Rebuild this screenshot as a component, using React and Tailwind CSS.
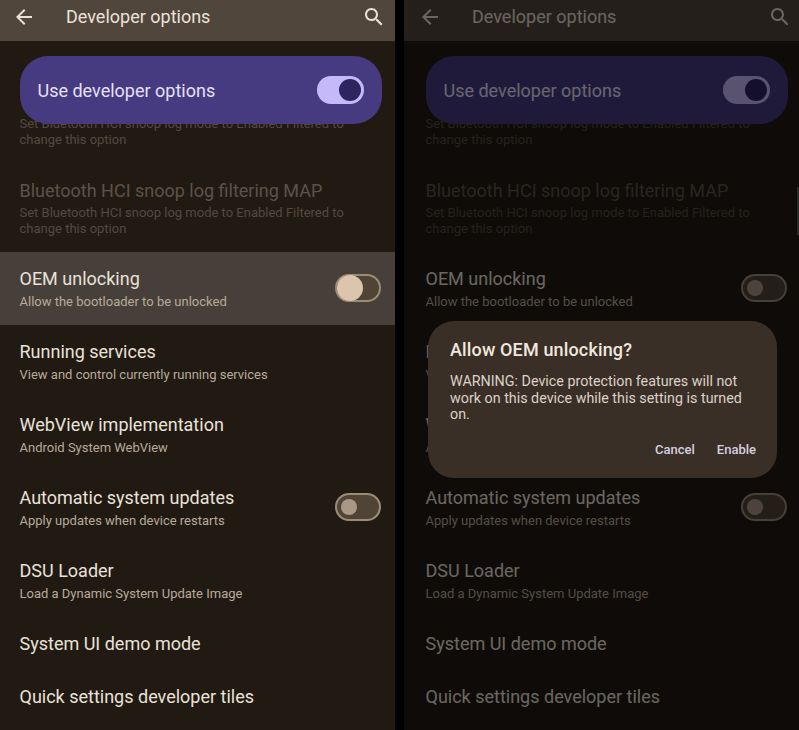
import React from 'react';

const Toggle = ({ pressed }) => (
  <div className="-mt-[1px] flex h-[28px] w-[46px] items-center rounded-full border-2 border-[#9c8c76] bg-[#4f4435] pl-[4px]">
    {pressed ? (
      <div className="-ml-[4px] h-[26px] w-[26px] shrink-0 rounded-full bg-[#dcc5ac]" />
    ) : (
      <div className="h-[16px] w-[16px] shrink-0 rounded-full bg-[#a99886]" />
    )}
  </div>
);

const Row = ({ title, sub, toggle, pressed, highlighted, className, shifted }) => (
  <div className={`flex items-center justify-between ${shifted ? 'pl-[21.5px] pr-[12px]' : 'pl-[19.5px] pr-[14px]'} ${highlighted ? 'bg-[#47403a]' : ''} ${className}`}>
    <div>
      <div className="h-[24px] text-[18px] leading-[24px] text-[#eae2d8]">{title}</div>
      {sub && <div className="mt-[3px] text-[13px] leading-[16px] text-[#b8ab99]">{sub}</div>}
    </div>
    {toggle && <Toggle pressed={pressed} />}
  </div>
);

// the right shot is cropped 2px further in, so its content sits 2px over
const Panel = ({ dimmed }) => (
  <div className="relative h-[730px] w-[395px] overflow-hidden bg-[#211a13] font-['Roboto',sans-serif]">
    {/* header, top is cropped off in the shot */}
    <div className={`flex h-[41px] items-center bg-[#50463b] pb-[7px] text-[#eae2d8] ${dimmed ? 'pl-[13.5px] pr-[7px]' : 'pl-[11.5px] pr-[9px]'}`}>
      <svg className="h-[24px] w-[24px]" viewBox="0 0 24 24" fill="currentColor">
        <path d="M20 11H7.83l5.59-5.59L12 4l-8 8 8 8 1.41-1.41L7.83 13H20v-2z" />
      </svg>
      <div className="ml-[30.5px] flex-1 text-[18px] leading-[24px]">Developer options</div>
      <svg className="h-[24px] w-[24px]" viewBox="0 0 24 24" fill="currentColor">
        <path d="M15.5 14h-.79l-.28-.27C15.41 12.59 16 11.11 16 9.5 16 5.91 13.09 3 9.5 3S3 5.91 3 9.5 5.91 16 9.5 16c1.61 0 3.09-.59 4.23-1.57l.27.28v.79l5 4.99L20.49 19l-4.99-5zm-6 0C7.01 14 5 11.99 5 9.5S7.01 5 9.5 5 14 7.01 14 9.5 11.99 14 9.5 14z" />
      </svg>
    </div>

    {/* main switch card, list scrolls under it */}
    <div className={`relative z-10 mt-[15px] flex h-[68px] w-[362px] items-center justify-between rounded-[28px] bg-[#463b80] pl-[18px] pr-[17.5px] ${dimmed ? 'ml-[21.5px]' : 'ml-[19.5px]'}`}>
      <span className="text-[18px] text-[#e6e0f8]">Use developer options</span>
      <div className="flex h-[28px] w-[47px] items-center justify-end rounded-full bg-[#c6b9f9] pr-[3px]">
        <div className="h-[22px] w-[22px] rounded-full bg-[#2e2560]" />
      </div>
    </div>

    <div className="-mt-[8px] flex flex-col">
      <div className={`h-[47px] text-[13px] leading-[16px] text-[#524a3f] ${dimmed ? 'pl-[21.5px]' : 'pl-[19.5px]'}`}>
        Set Bluetooth HCI snoop log mode to Enabled Filtered to
        <br />
        change this option
      </div>
      <div className={`h-[89px] pt-[15px] ${dimmed ? 'pl-[21.5px]' : 'pl-[19.5px]'}`}>
        <div className="mt-[1px] h-[24px] text-[18px] leading-[24px] text-[#5c5348]">Bluetooth HCI snoop log filtering MAP</div>
        <div className="mt-[2px] text-[13px] leading-[16px] text-[#524a3f]">
          Set Bluetooth HCI snoop log mode to Enabled Filtered to
          <br />
          change this option
        </div>
      </div>
      <Row shifted={dimmed} className="h-[73px]" title="OEM unlocking" sub="Allow the bootloader to be unlocked" toggle pressed={!dimmed} highlighted={!dimmed} />
      <Row shifted={dimmed} className="h-[73px]" title="Running services" sub="View and control currently running services" />
      <Row shifted={dimmed} className="h-[73px]" title="WebView implementation" sub="Android System WebView" />
      <Row shifted={dimmed} className="h-[73px]" title="Automatic system updates" sub="Apply updates when device restarts" toggle />
      <Row shifted={dimmed} className="h-[73px]" title="DSU Loader" sub="Load a Dynamic System Update Image" />
      <Row shifted={dimmed} className="h-[53px]" title="System UI demo mode" />
      <Row shifted={dimmed} className="h-[54px]" title="Quick settings developer tiles" />
    </div>

    {dimmed && (
      <>
        <div className="absolute inset-0 z-20 bg-black/55" />
        {/* scroll indicator */}
        <div className="absolute right-0 top-[187px] z-20 h-[48px] w-[2px] bg-[#2a2a28]" />
        <div className="absolute left-[24px] top-[321px] z-30 h-[157px] w-[349px] rounded-[26px] bg-[#3a2f26] pl-[22px] pr-[21px] pt-[17px]">
          <div className="text-[18px] font-medium leading-[24px] tracking-[0.15px] text-[#f0e8de]">Allow OEM unlocking?</div>
          <div className="mt-[11px] text-[14.3px] leading-[16.7px] text-[#dcd2c6]">
            WARNING: Device protection features will not work on this device while this setting is turned on.
          </div>
          <div className="mt-[19px] flex justify-end gap-[22px] text-[13px] font-medium leading-[16px] text-[#d6cfe0]">
            <span>Cancel</span>
            <span>Enable</span>
          </div>
        </div>
      </>
    )}
  </div>
);

export default function App() {
  return (
    <div className="flex h-[730px] w-[799px] justify-between overflow-hidden bg-black">
      <Panel />
      <Panel dimmed />
    </div>
  );
}
